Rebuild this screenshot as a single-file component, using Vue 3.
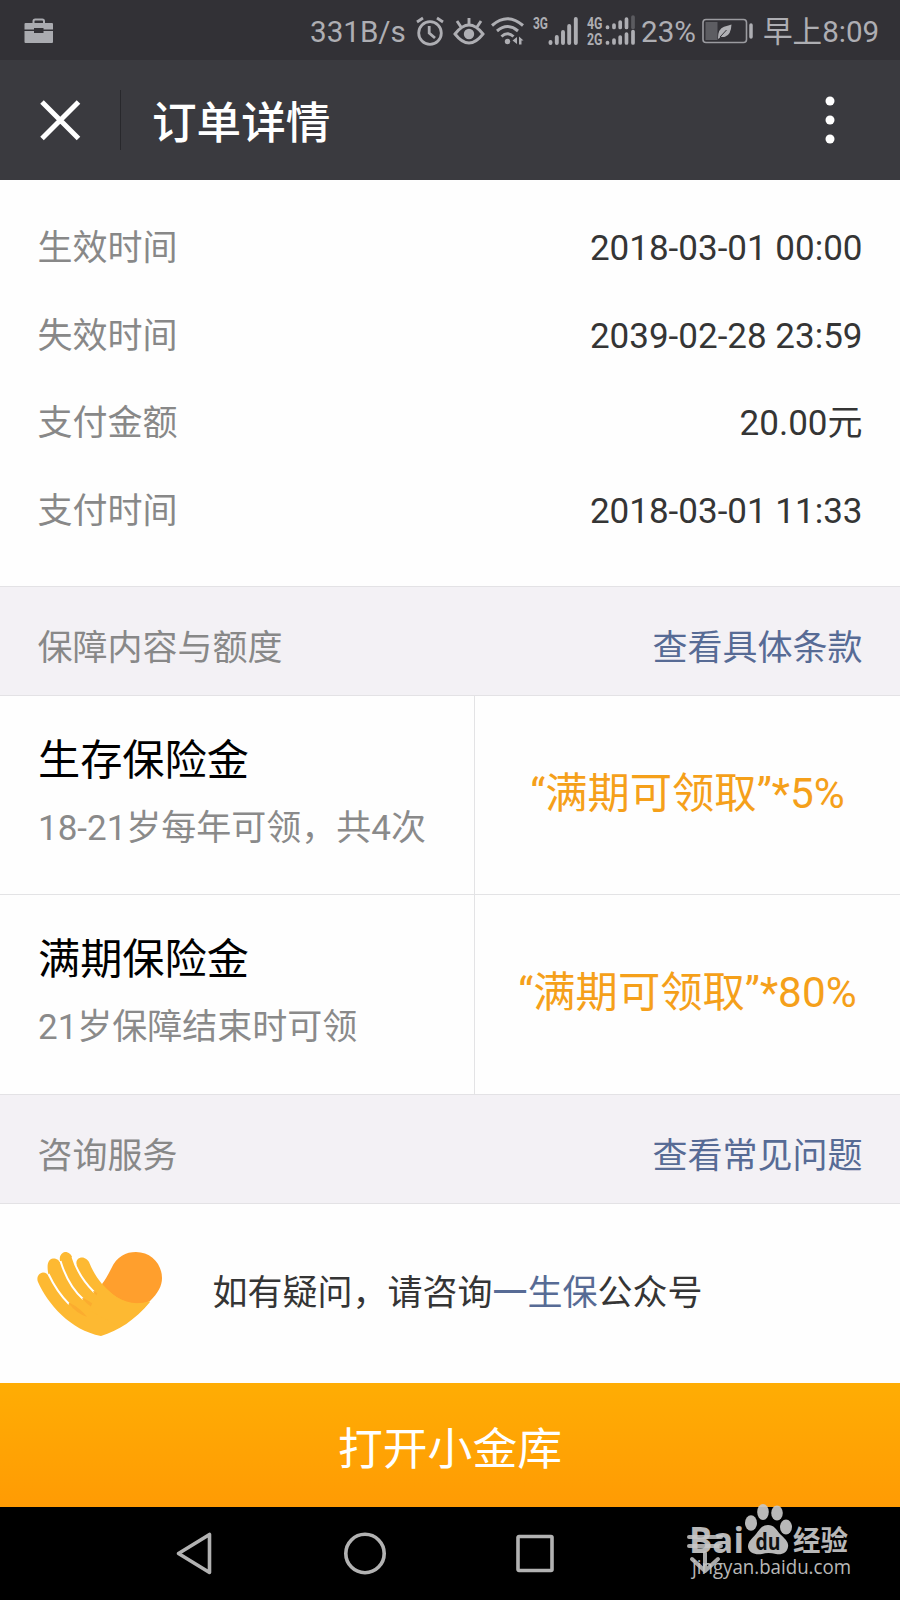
<script setup>
const details = [
  { label: '生效时间', value: '2018-03-01 00:00' },
  { label: '失效时间', value: '2039-02-28 23:59' },
  { label: '支付金额', value: '20.00元' },
  { label: '支付时间', value: '2018-03-01 11:33' },
]
const benefits = [
  { name: '生存保险金', note: '18-21岁每年可领，共4次', amount: '“满期可领取”*5%' },
  { name: '满期保险金', note: '21岁保障结束时可领', amount: '“满期可领取”*80%' },
]
</script>

<template>
  <div class="phone">
    <div class="status">
      <svg class="briefcase" width="30" height="26" viewBox="0 0 30 26">
        <path d="M9.5 6V3.2Q9.5 1.5 11.2 1.5H18.3Q20 1.5 20 3.2V6" fill="none" stroke="#aaabb0" stroke-width="2" />
        <path d="M1.5 5H28Q29 5 29 6V11.5H19.5V10H10V11.5H.5V6Q.5 5 1.5 5Z" fill="#aaabb0" />
        <path d="M.5 13H10V15H19.5V13H29V24Q29 25 28 25H1.5Q.5 25 .5 24Z" fill="#aaabb0" />
      </svg>
      <span class="speed">331B/s</span>
      <svg class="alarm" width="30" height="30" viewBox="0 0 30 30" fill="none" stroke="#aeaeb3" stroke-width="2.8">
        <circle cx="15" cy="17" r="11.3" />
        <path d="M14.2 10V17L20 22" />
        <path d="M2 6L8 2M22 2L28 6" />
      </svg>
      <svg class="eye" width="32" height="30" viewBox="0 0 32 30" fill="none" stroke="#aeaeb3" stroke-width="2.9">
        <path d="M2 18Q9 9 16 9T30 18Q23 27 16 27T2 18Z" />
        <circle cx="16" cy="18" r="5.2" fill="#aeaeb3" stroke="none" />
        <path d="M16 9V2M8 11L4 5M24 11L28 5" />
      </svg>
      <svg class="wifi" width="34" height="30" viewBox="0 0 34 30" fill="none" stroke="#aeaeb3" stroke-width="3">
        <path d="M1 9.5Q16.5-4 32 9.5M6 15Q16.5 6 27 15M10.5 20.5Q16.5 15 22.5 20.5" />
        <circle cx="16.5" cy="25.5" r="2.7" fill="#aeaeb3" stroke="none" />
        <path d="M26 21V28L21.5 24.5ZM28 20.5L32.5 24.5H30.5V28.5H28Z" fill="#aeaeb3" stroke="none" />
      </svg>
      <svg class="signal" width="46" height="30" viewBox="0 0 46 30">
        <text x="0" y="13" class="net" textLength="15" lengthAdjust="spacingAndGlyphs">3G</text>
        <path d="M17.500 26V27M23.800 21V27M30 16V27M36.200 10V27M42.800 3V27" stroke="#aeaeb3" stroke-width="3.9" stroke-linecap="round" />
      </svg>
      <svg class="dual" width="49" height="32" viewBox="0 0 49 32">
        <text x="0" y="13.500" class="net" textLength="15.5" lengthAdjust="spacingAndGlyphs">4G</text>
        <text x="0" y="29.500" class="net" textLength="15.5" lengthAdjust="spacingAndGlyphs">2G</text>
        <g stroke="#aeaeb3" stroke-width="3.7" stroke-linecap="round">
          <path d="M20.500 12V12.400M27 10V12.400M33.200 7V12.400M39.500 4V12.400M20.500 27.500V28M27 25V28M33.200 22V28M39.500 19V28M46 16.500V28" />
          <path d="M46 2V12.400" stroke="#5b5b60" />
        </g>
      </svg>
      <span class="percent">23%</span>
      <svg class="battery" width="52" height="26" viewBox="0 0 52 26">
        <rect x="1" y="1.5" width="43.5" height="23" rx="3" fill="none" stroke="#9b9ba0" stroke-width="1.6" />
        <rect x="3.5" y="4" width="12" height="18" fill="#5d5d62" />
        <path d="M29.5 6.500Q29 17 23 18.800Q20.500 19.500 18.800 18.400L16.500 21L16 20Q16 11 22 8.800Q27 7.500 29.500 6.500Z" fill="#b0b0b4" />
        <path d="M18 19L24.500 12" stroke="#343337" stroke-width="1" />
        <path d="M49 7V19" stroke="#aeaeb3" stroke-width="3.5" stroke-linecap="round" />
      </svg>
      <span class="clock">早上8:09</span>
    </div>

    <header class="titlebar">
      <svg class="close" width="40" height="40" viewBox="0 0 40 40" stroke="#fff" stroke-width="5">
        <path d="M2 2L38.500 38.500M38.500 2L2 38.500" />
      </svg>
      <i class="divider"></i>
      <h1>订单详情</h1>
      <svg class="more" width="10" height="48" viewBox="0 0 10 48" fill="#fff">
        <circle cx="5" cy="5" r="4.5" /><circle cx="5" cy="24" r="4.500" /><circle cx="5" cy="43" r="4.500" />
      </svg>
    </header>

    <section class="details">
      <div v-for="d in details" :key="d.label" class="detail">
        <span class="label">{{ d.label }}</span>
        <span>{{ d.value }}</span>
      </div>
    </section>

    <div class="band">
      <span>保障内容与额度</span>
      <a>查看具体条款</a>
    </div>

    <div v-for="b in benefits" :key="b.name" class="benefit">
      <div class="info">
        <div class="name">{{ b.name }}</div>
        <div class="note">{{ b.note }}</div>
      </div>
      <div class="amount">{{ b.amount }}</div>
    </div>

    <div class="band">
      <span>咨询服务</span>
      <a>查看常见问题</a>
    </div>

    <div class="consult">
      <svg class="hand" width="126" height="86" viewBox="0 0 126 86">
        <path d="M1 30C-1 25 2 21 6 20.500C9 20.500 11 22 12 25C9 13 11 7 16 6.500C20 6.500 22 8 24 12C21 5 24 1 28 0C32 0 34 2 36 7C37 10 38 12 40 14C38 9 41 5.500 45 5.500C48 5.500 51 8 52 10C55 18 60 26 65 32L113 50C98 68 81 79 64 84C33 78 11 52 1 30Z" fill="#fdb932" />
        <path d="M11.500 22C18 36 24 44 32 52M23.500 9C29 27 37 39 46 47M35.500 5C40 20 48 31 57 40" fill="none" stroke="#fff" stroke-width="2" />
        <path d="M31.500 51Q39 61 50 65Q43 56 33 51ZM45 46Q53 56 64 60Q57 51 46 46ZM56 39Q62 48 71 52Q65 44 57 39Z" fill="#fbac2f" />
        <path d="M65 32Q69 27 74 17C80 4 89 0 99 0C114 0 125 12 125 26C125 34 121 41 113 49C92 57 77 45 65 32Z" fill="#ff9f2d" />
        <path d="M65 32C76 45 92 56 113 49Q101 64 83 75L52 58Z" fill="#fdb932" />
      </svg>
      <p>如有疑问，请咨询<a>一生保</a>公众号</p>
    </div>

    <button class="open">打开小金库</button>

    <nav class="nav">
      <svg class="back" width="38" height="44" viewBox="0 0 38 44"><path d="M34.500 2.500V40.500L3.500 21.500Z" /></svg>
      <svg class="home" width="44" height="44" viewBox="0 0 44 44"><circle cx="22" cy="21.500" r="19.200" /></svg>
      <svg class="recent" width="40" height="40" viewBox="0 0 40 40"><rect x="3" y="2.500" width="34" height="34" rx="1" /></svg>
      <svg class="hide" width="36" height="40" viewBox="0 0 36 40"><path d="M2 3H34M2 12H34M18 19V37M5 25L18 37L31 25" /></svg>
    </nav>

    <div class="watermark">
      <svg width="168" height="84" viewBox="0 0 168 84">
        <g fill="#c8c8c8">
          <text x="0" y="52.500" class="wm-brand" textLength="55" lengthAdjust="spacingAndGlyphs">Bai</text>
          <ellipse cx="62" cy="23" rx="6" ry="7.800" />
          <ellipse cx="74" cy="12" rx="5.800" ry="8" />
          <ellipse cx="88" cy="13" rx="5.800" ry="7.500" />
          <ellipse cx="97" cy="27" rx="6" ry="7.500" />
          <path d="M79 25C85 25 87 29 91 34C96 39 100 42 99 47C98 53 93 55 87 54Q79 52 73 54C66 55 60 53 59 47C59 41 63 39 67 34C71 29 73 25 79 25Z" />
          <text x="104" y="51" class="wm-cn" textLength="55" lengthAdjust="spacingAndGlyphs">经验</text>
          <text x="3" y="74" class="wm-url" textLength="159" lengthAdjust="spacingAndGlyphs">jingyan.baidu.com</text>
        </g>
        <text x="66.500" y="49.500" class="wm-du" textLength="25" lengthAdjust="spacingAndGlyphs">du</text>
      </svg>
    </div>
  </div>
</template>

<style>
body { margin: 0; }
</style>

<style scoped>
.phone {
  position: relative;
  display: flex;
  flex-direction: column;
  width: 900px;
  height: 1600px;
  overflow: hidden;
  background: #fefefe;
  color: #353535;
  font: 35px/1.3 Roboto, "Noto Sans CJK SC", sans-serif;
}
svg { display: block; flex: none; overflow: visible; }
a { color: #576b95; }

.status {
  display: flex;
  align-items: center;
  box-sizing: border-box;
  height: 60px;
  padding: 2px 0 0 24px;
  background: #323136;
  color: #aeaeb3;
  font-size: 29.6px;
  line-height: 58px;
  white-space: nowrap;
}
.speed { width: 105px; margin: 1px 0 0 256px; }
.alarm { margin-right: 8px; }
.eye { margin-right: 6px; }
.wifi { margin-right: 8px; }
.signal { margin-right: 8px; }
.dual { margin-right: 5px; }
.percent { width: 61px; margin-top: 1px; }
.battery { margin-right: 9px; }
.clock { margin-top: 1px; }
.net { font: 700 16px Roboto, sans-serif; fill: #aeaeb3; }

.titlebar {
  display: flex;
  align-items: center;
  box-sizing: border-box;
  height: 120px;
  padding: 0 65px 0 40px;
  background: #3a3a3f;
}
.divider { width: 1px; height: 60px; margin: 0 31px 0 40px; background: #28282c; }
h1 { flex: 1; margin: 8px 0 0; color: #fff; font-size: 44.6px; font-weight: 500; line-height: 60px; }

.details { box-sizing: border-box; height: 406px; padding: 25px 37.5px 0; }
.detail { display: flex; justify-content: space-between; height: 87.5px; line-height: 87.5px; }
.label { color: #888; }

.band {
  display: flex;
  justify-content: space-between;
  align-items: center;
  box-sizing: border-box;
  height: 110px;
  padding: 16px 37.5px 0;
  line-height: 92px;
  border: solid #e3e2e5;
  border-width: 1px 0;
  background: #f3f1f5;
  color: #888;
}

.benefit { display: flex; box-sizing: border-box; height: 198px; }
.benefit + .benefit { height: 200px; border-top: 1px solid #e3e3e5; }
.info { box-sizing: border-box; width: 475px; padding: 35px 0 0 38px; border-right: 1px solid #e3e3e5; }
.name { color: #000; font-size: 42.2px; line-height: 60px; }
.note { margin-top: 13px; color: #8a8a8a; line-height: 50px; white-space: nowrap; }
.amount { flex: 1; color: #f5a01a; font-size: 42.3px; line-height: 196px; text-align: center; white-space: nowrap; }

.consult { display: flex; align-items: center; height: 179px; padding-left: 37px; }
.hand { margin-top: 2px; }
.consult p { margin: 1px 0 0 49.5px; }

.open {
  height: 124px;
  padding: 10px 0 0;
  border: 0;
  background: linear-gradient(#ffad04, #ff9b04);
  color: #fff;
  font: 44.8px/114px Roboto, "Noto Sans CJK SC", sans-serif;
}

.nav { display: flex; align-items: center; flex: 1; padding-left: 175px; background: #000; }
.nav svg { fill: none; stroke: #b2b2b2; stroke-width: 3.6; stroke-linejoin: round; }
.home { margin-left: 130px; }
.recent { margin-left: 128px; }
.nav .hide { margin-left: 132px; stroke: #aaa; stroke-width: 4; stroke-linecap: round; }

.watermark { position: absolute; left: 689px; top: 1500px; opacity: .92; }
.wm-brand { font: 700 35px "Open Sans", sans-serif; }
.wm-cn { font: 700 28px "Noto Sans CJK SC", sans-serif; }
.wm-url { font: 20px "Open Sans", sans-serif; }
.wm-du { font: 700 23px "Open Sans", sans-serif; fill: #111; }
</style>
